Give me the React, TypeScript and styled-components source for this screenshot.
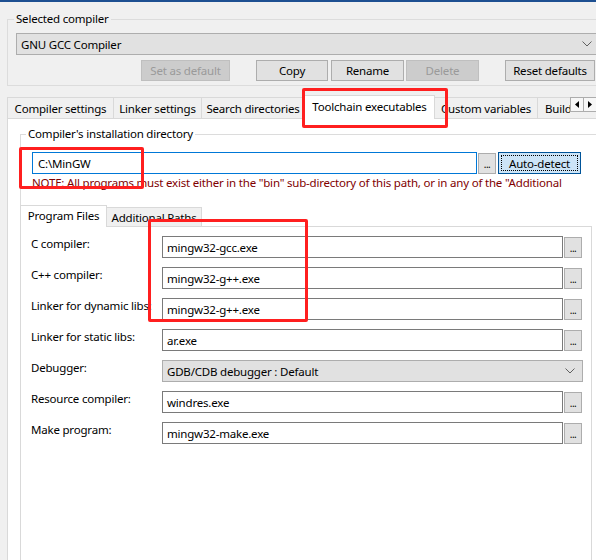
import React, { FC } from "react";
import styled, { createGlobalStyle } from "styled-components";

const GlobalStyle = createGlobalStyle`
  html, body {
    margin: 0;
    padding: 0;
    background: #f0f0f0;
  }
  body {
    font-family: "Noto Sans", "Liberation Sans", sans-serif;
    font-size: 11.5px;
    letter-spacing: -0.2px;
    color: #000;
  }
`;

const Window = styled.div`
  position: relative;
  width: 596px;
  height: 560px;
  overflow: hidden;
  box-sizing: border-box;
  background: #f0f0f0;
  border-top: 2px solid #1d4f91;
`;

const Group = styled.fieldset<{ $top: number; $left: number; $pad: string; $open?: boolean }>`
  margin: ${(p) => p.$top}px 0 0 ${(p) => p.$left}px;
  width: 602px;
  min-width: 0;
  box-sizing: border-box;
  padding: ${(p) => p.$pad};
  border: 1px solid #dcdcdc;
  border-bottom: ${(p) => (p.$open ? "none" : "1px solid #dcdcdc")};
`;

const Legend = styled.legend<{ $shift: number }>`
  height: 16px;
  line-height: 16px;
  padding: 0 2px;
  margin-left: ${(p) => p.$shift}px;
`;

const Combo = styled.div<{ $w: number }>`
  width: ${(p) => p.$w}px;
  height: 22px;
  box-sizing: border-box;
  display: flex;
  align-items: center;
  justify-content: space-between;
  padding: 0 7px 0 4px;
  background: #e1e1e1;
  border: 1px solid #adadad;
`;

const ButtonRow = styled.div`
  display: flex;
  margin-top: 5px;
  height: 21px;
`;

const Btn = styled.button<{ $w: number; $ml?: number }>`
  width: ${(p) => p.$w}px;
  height: 21px;
  margin: 0 0 0 ${(p) => p.$ml ?? 0}px;
  padding: 0;
  box-sizing: border-box;
  font: inherit;
  letter-spacing: inherit;
  color: #000;
  background: #e1e1e1;
  border: 1px solid #adadad;

  &:disabled {
    color: #9a9a9a;
    background: #cccccc;
    border-color: #bfbfbf;
  }
`;

const DefaultBtn = styled(Btn)`
  height: 22px;
  background: #cce4f7;
  border-color: #005499;
  display: flex;
  align-items: center;
  justify-content: center;
`;

const FocusRect = styled.span`
  flex: 1;
  align-self: stretch;
  margin: 2px;
  border: 1px dotted #000;
  display: flex;
  align-items: center;
  justify-content: center;
`;

const TabHeader = styled.div<{ $h: number; $left: number; $top: number }>`
  position: relative;
  z-index: 1;
  display: flex;
  align-items: flex-start;
  height: ${(p) => p.$h}px;
  margin: ${(p) => p.$top}px 0 -1px ${(p) => p.$left}px;
`;

const TabList = styled.div<{ $w: number }>`
  display: flex;
  align-items: flex-end;
  align-self: stretch;
  width: ${(p) => p.$w}px;
  overflow: hidden;
`;

const Tab = styled.div<{ $w: number; $active?: boolean; $h: number }>`
  flex: none;
  width: ${(p) => p.$w}px;
  height: ${(p) => (p.$active ? p.$h + 3 : p.$h)}px;
  margin: 0 -1px ${(p) => (p.$active ? 0 : 1)}px 0;
  box-sizing: border-box;
  display: flex;
  align-items: center;
  justify-content: center;
  white-space: nowrap;
  overflow: hidden;
  background: ${(p) => (p.$active ? "#ffffff" : "#f0f0f0")};
  border: 1px solid #d9d9d9;
  border-bottom: none;
  padding-bottom: ${(p) => (p.$active ? 2 : 0)}px;
  position: relative;
  z-index: ${(p) => (p.$active ? 2 : 1)};
`;

const ClipTab = styled(Tab)`
  justify-content: flex-start;
  padding-left: 7px;
`;

const Scroller = styled.div`
  display: flex;
  margin-top: 2px;
`;

const ScrollBtn = styled.div`
  width: 14px;
  height: 15px;
  box-sizing: border-box;
  border: 1px solid #adadad;
  background: #f7f7f7;
  display: flex;
  align-items: center;
  justify-content: center;
  margin-right: -1px;
`;

const Panel = styled.div<{ $left: number; $w: number; $pad: string }>`
  margin-left: ${(p) => p.$left}px;
  width: ${(p) => p.$w}px;
  height: 600px;
  box-sizing: border-box;
  background: #ffffff;
  border: 1px solid #d9d9d9;
  border-bottom: none;
  padding: ${(p) => p.$pad};
`;

const InputRow = styled.div`
  display: flex;
  align-items: flex-start;
`;

const TextBox = styled.div<{ $w: number; $focused?: boolean }>`
  width: ${(p) => p.$w}px;
  height: 22px;
  box-sizing: border-box;
  display: flex;
  align-items: center;
  padding-left: ${(p) => (p.$focused ? 5 : 4)}px;
  background: #ffffff;
  border: 1px solid ${(p) => (p.$focused ? "#0078d7" : "#7a7a7a")};
  white-space: nowrap;
`;

const DotsBtn = styled.div`
  width: 18px;
  height: 21px;
  margin: 1px 0 0 1px;
  box-sizing: border-box;
  border: 1px solid #adadad;
  background: #e1e1e1;
  display: flex;
  align-items: flex-end;
  justify-content: center;
  padding-bottom: 4px;
  font-size: 10px;
  line-height: 1;
  letter-spacing: -0.5px;
`;

const Note = styled.div`
  margin-top: 2px;
  width: 563px;
  height: 14px;
  line-height: 14px;
  color: #800000;
  white-space: nowrap;
  overflow: hidden;
`;

const FieldRow = styled.div`
  display: flex;
  align-items: flex-start;
  height: 22px;
  margin-bottom: 9px;
`;

const FieldLabel = styled.div`
  width: 131px;
  line-height: 16px;
  white-space: nowrap;
`;

const Mark = styled.div<{ $x: number; $y: number; $w: number; $h: number }>`
  position: absolute;
  left: ${(p) => p.$x}px;
  top: ${(p) => p.$y}px;
  width: ${(p) => p.$w}px;
  height: ${(p) => p.$h}px;
  box-sizing: border-box;
  border: 3px solid #ff1f1f;
  border-radius: 2px;
  pointer-events: none;
  z-index: 10;
`;

const Chevron: FC = () => (
  <svg width="10" height="6" viewBox="0 0 10 6">
    <path d="M0.5 0.5 L5 5 L9.5 0.5" fill="none" stroke="#606060" strokeWidth="1" />
  </svg>
);

const Arrow: FC<{ dir: "left" | "right" }> = ({ dir }) => (
  <svg width="4" height="7" viewBox="0 0 4 7">
    {dir === "left" ? <path d="M4 0 L0 3.5 L4 7 Z" fill="#000" /> : <path d="M0 0 L4 3.5 L0 7 Z" fill="#000" />}
  </svg>
);

const toolchain = [
  { label: "C compiler:", value: "mingw32-gcc.exe" },
  { label: "C++ compiler:", value: "mingw32-g++.exe" },
  { label: "Linker for dynamic libs:", value: "mingw32-g++.exe" },
  { label: "Linker for static libs:", value: "ar.exe" },
  { label: "Debugger:", value: "GDB/CDB debugger : Default", combo: true },
  { label: "Resource compiler:", value: "windres.exe" },
  { label: "Make program:", value: "mingw32-make.exe" },
];

const outerTabs = [
  { name: "Compiler settings", w: 107 },
  { name: "Linker settings", w: 89 },
  { name: "Search directories", w: 104 },
  { name: "Toolchain executables", w: 131, active: true },
  { name: "Custom variables", w: 104 },
];

const App: FC = () => {
  return (
    <>
      <GlobalStyle />
      <Window>
        <Group $top={9} $left={7} $pad="6px 8px 4px 8px">
          <Legend $shift={-2}>Selected compiler</Legend>
          <Combo $w={584}>
            <span>GNU GCC Compiler</span>
            <Chevron />
          </Combo>
          <ButtonRow>
            <Btn $w={89} $ml={125} disabled>Set as default</Btn>
            <Btn $w={72} $ml={26}>Copy</Btn>
            <Btn $w={73} $ml={3}>Rename</Btn>
            <Btn $w={73} $ml={2} disabled>Delete</Btn>
            <Btn $w={90} $ml={26}>Reset defaults</Btn>
          </ButtonRow>
        </Group>

        <TabHeader $h={24} $left={7} $top={9}>
          <TabList $w={563}>
            {outerTabs.map((t) => (
              <Tab key={t.name} $w={t.w} $h={21} $active={t.active}>
                {t.name}
              </Tab>
            ))}
            <ClipTab $w={80} $h={21}>Build options</ClipTab>
          </TabList>
          <Scroller>
            <ScrollBtn><Arrow dir="left" /></ScrollBtn>
            <ScrollBtn><Arrow dir="right" /></ScrollBtn>
          </Scroller>
        </TabHeader>

        <Panel $left={7} $w={600} $pad="7px 0 0 12px">
          <Group $top={0} $left={0} $pad="10px 0 15px 11px" $open>
            <Legend $shift={-6}>Compiler's installation directory</Legend>
            <InputRow>
              <TextBox $w={445} $focused>C:\MinGW</TextBox>
              <DotsBtn>...</DotsBtn>
              <DefaultBtn as="div" $w={83} $ml={2}>
                <FocusRect>Auto-detect</FocusRect>
              </DefaultBtn>
            </InputRow>
            <Note>NOTE: All programs must exist either in the "bin" sub-directory of this path, or in any of the "Additional</Note>
          </Group>

          <TabHeader $h={22} $left={0} $top={0}>
            <TabList $w={300}>
              <Tab $w={87} $h={19} $active>Program Files</Tab>
              <Tab $w={96} $h={19}>Additional Paths</Tab>
            </TabList>
          </TabHeader>
          <Panel $left={0} $w={572} $pad="9px 0 0 10px">
            {toolchain.map((f) => (
              <FieldRow key={f.label}>
                <FieldLabel>{f.label}</FieldLabel>
                {f.combo ? (
                  <Combo $w={421}>
                    <span>{f.value}</span>
                    <Chevron />
                  </Combo>
                ) : (
                  <>
                    <TextBox $w={401}>{f.value}</TextBox>
                    <DotsBtn>...</DotsBtn>
                  </>
                )}
              </FieldRow>
            ))}
          </Panel>
        </Panel>

        <Mark $x={302} $y={86} $w={146} $h={40} />
        <Mark $x={19} $y={145} $w={125} $h={42} />
        <Mark $x={148} $y={217} $w={160} $h={103} />
      </Window>
    </>
  );
};

export default App;
